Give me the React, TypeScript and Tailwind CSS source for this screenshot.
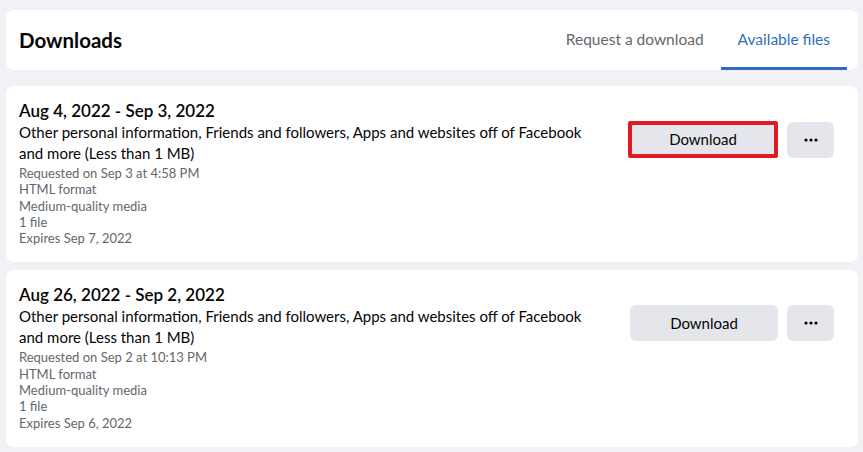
const FILES = [
  {
    range: "Aug 4, 2022 - Sep 3, 2022",
    requested: "Requested on Sep 3 at 4:58 PM",
    expires: "Expires Sep 7, 2022",
    highlighted: true,
  },
  {
    range: "Aug 26, 2022 - Sep 2, 2022",
    requested: "Requested on Sep 2 at 10:13 PM",
    expires: "Expires Sep 6, 2022",
    highlighted: false,
  },
];

function FileCard({ file }: { file: (typeof FILES)[number] }) {
  return (
    <div className="flex items-start justify-between rounded-lg bg-white pl-[13px] pr-[24px] pt-[14px] pb-[16px]">
      <div className="w-[590px]">
        <div className="text-[17px] font-semibold leading-[22px] text-[#050505]">{file.range}</div>
        <div className="text-[15px] leading-[21px] text-[#050505]">
          Other personal information, Friends and followers, Apps and websites off of Facebook and more (Less than 1 MB)
        </div>
        <div className="mt-[1px] text-[13px] leading-[16.3px] text-[#65676b]">
          <div>{file.requested}</div>
          <div>HTML format</div>
          <div>Medium-quality media</div>
          <div>1 file</div>
          <div>{file.expires}</div>
        </div>
      </div>
      <div className="mt-[21px] flex items-center gap-[9px]">
        <button
          className={
            file.highlighted
              ? "h-[37px] w-[150px] rounded-[2px] border-4 border-[#e01b24] bg-[#e4e6eb] text-[15px] text-[#050505]"
              : "h-[36px] w-[148px] rounded-md bg-[#e4e6eb] text-[15px] text-[#050505]"
          }
        >
          Download
        </button>
        <button className="flex h-[36px] w-[47px] items-center justify-center rounded-md bg-[#e4e6eb] text-[#050505]">
          <svg width="14" height="4" viewBox="0 0 14 4" fill="currentColor">
            <circle cx="2" cy="2" r="1.6" />
            <circle cx="7" cy="2" r="1.6" />
            <circle cx="12" cy="2" r="1.6" />
          </svg>
        </button>
      </div>
    </div>
  );
}

export default function App() {
  return (
    <div
      className="flex min-h-[452px] flex-col gap-[16px] bg-[#f0f2f5] pl-[6px] pr-[5px] pt-[10px]"
      style={{ fontFamily: 'Lato, "Noto Sans", sans-serif' }}
    >
      <div className="flex h-[60px] items-stretch justify-between rounded-lg bg-white pl-[13px] pr-[11px]">
        <div className="flex items-center text-[20.5px] font-bold text-[#050505]">Downloads</div>
        <div className="flex items-stretch">
          <div className="flex items-center px-[17px] text-[15.5px] text-[#65676b]">Request a download</div>
          <div className="relative flex items-center px-[17px] text-[15.5px] text-[#2f6fc0]">
            Available files
            <div className="absolute bottom-0 left-0 right-0 h-[3px] bg-[#2d6cbf]" />
          </div>
        </div>
      </div>
      <div className="flex flex-col gap-[8px]">
        {FILES.map((f) => (
          <FileCard key={f.range} file={f} />
        ))}
      </div>
    </div>
  );
}
